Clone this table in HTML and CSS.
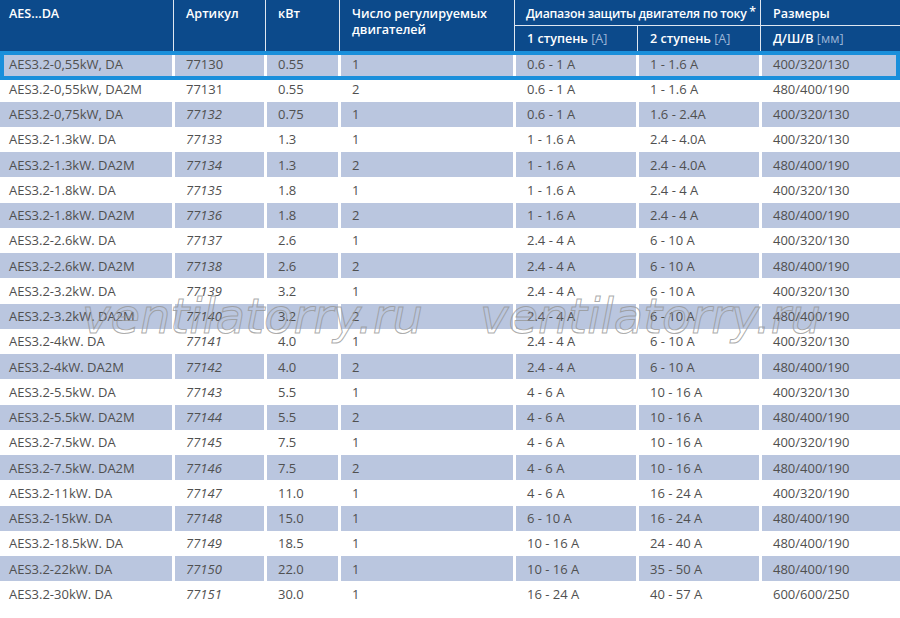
FILE: index.html
```html
<!DOCTYPE html>
<html lang="ru">
<head>
<meta charset="utf-8">
<title>AES...DA</title>
<link rel="stylesheet" href="styles.css">
</head>
<body>
<div class="page">
  <div class="head">
    <div class="h hc1 tall">AES...DA</div>
    <div class="h hc2 tall">Артикул</div>
    <div class="h hc3 tall">кВт</div>
    <div class="h hc4 tall">Число регулируемых<br>двигателей</div>
    <div class="h group">Диапазон защиты двигателя по току <span class="star">*</span></div>
    <div class="h hc7">Размеры</div>
    <div class="h sub">1 ступень <span class="unit">[A]</span></div>
    <div class="h sub">2 ступень <span class="unit">[A]</span></div>
    <div class="h sub">Д/Ш/В <span class="unit">[мм]</span></div>
  </div>
  <div class="body">
    <div class="row shade"><div class="c first">AES3.2-0,55kW, DA</div><div class="c">77130</div><div class="c">0.55</div><div class="c">1</div><div class="c">0.6 - 1 A</div><div class="c">1 - 1.6 A</div><div class="c">400/320/130</div></div>
    <div class="row"><div class="c first">AES3.2-0,55kW, DA2M</div><div class="c">77131</div><div class="c">0.55</div><div class="c">2</div><div class="c">0.6 - 1 A</div><div class="c">1 - 1.6 A</div><div class="c">480/400/190</div></div>
    <div class="row shade"><div class="c first">AES3.2-0,75kW, DA</div><div class="c it">77132</div><div class="c">0.75</div><div class="c">1</div><div class="c">0.6 - 1 A</div><div class="c">1.6 - 2.4A</div><div class="c">400/320/130</div></div>
    <div class="row"><div class="c first">AES3.2-1.3kW. DA</div><div class="c it">77133</div><div class="c">1.3</div><div class="c">1</div><div class="c">1 - 1.6 A</div><div class="c">2.4 - 4.0A</div><div class="c">400/320/130</div></div>
    <div class="row shade"><div class="c first">AES3.2-1.3kW. DA2M</div><div class="c it">77134</div><div class="c">1.3</div><div class="c">2</div><div class="c">1 - 1.6 A</div><div class="c">2.4 - 4.0A</div><div class="c">480/400/190</div></div>
    <div class="row"><div class="c first">AES3.2-1.8kW. DA</div><div class="c it">77135</div><div class="c">1.8</div><div class="c">1</div><div class="c">1 - 1.6 A</div><div class="c">2.4 - 4 A</div><div class="c">400/320/130</div></div>
    <div class="row shade"><div class="c first">AES3.2-1.8kW. DA2M</div><div class="c it">77136</div><div class="c">1.8</div><div class="c">2</div><div class="c">1 - 1.6 A</div><div class="c">2.4 - 4 A</div><div class="c">480/400/190</div></div>
    <div class="row"><div class="c first">AES3.2-2.6kW. DA</div><div class="c it">77137</div><div class="c">2.6</div><div class="c">1</div><div class="c">2.4 - 4 A</div><div class="c">6 - 10 A</div><div class="c">400/320/130</div></div>
    <div class="row shade"><div class="c first">AES3.2-2.6kW. DA2M</div><div class="c it">77138</div><div class="c">2.6</div><div class="c">2</div><div class="c">2.4 - 4 A</div><div class="c">6 - 10 A</div><div class="c">480/400/190</div></div>
    <div class="row"><div class="c first">AES3.2-3.2kW. DA</div><div class="c it">77139</div><div class="c">3.2</div><div class="c">1</div><div class="c">2.4 - 4 A</div><div class="c">6 - 10 A</div><div class="c">400/320/130</div></div>
    <div class="row shade"><div class="c first">AES3.2-3.2kW. DA2M</div><div class="c it">77140</div><div class="c">3.2</div><div class="c">2</div><div class="c">2.4 - 4 A</div><div class="c">6 - 10 A</div><div class="c">480/400/190</div></div>
    <div class="row"><div class="c first">AES3.2-4kW. DA</div><div class="c it">77141</div><div class="c">4.0</div><div class="c">1</div><div class="c">2.4 - 4 A</div><div class="c">6 - 10 A</div><div class="c">400/320/130</div></div>
    <div class="row shade"><div class="c first">AES3.2-4kW. DA2M</div><div class="c it">77142</div><div class="c">4.0</div><div class="c">2</div><div class="c">2.4 - 4 A</div><div class="c">6 - 10 A</div><div class="c">480/400/190</div></div>
    <div class="row"><div class="c first">AES3.2-5.5kW. DA</div><div class="c it">77143</div><div class="c">5.5</div><div class="c">1</div><div class="c">4 - 6 A</div><div class="c">10 - 16 A</div><div class="c">400/320/130</div></div>
    <div class="row shade"><div class="c first">AES3.2-5.5kW. DA2M</div><div class="c it">77144</div><div class="c">5.5</div><div class="c">2</div><div class="c">4 - 6 A</div><div class="c">10 - 16 A</div><div class="c">480/400/190</div></div>
    <div class="row"><div class="c first">AES3.2-7.5kW. DA</div><div class="c it">77145</div><div class="c">7.5</div><div class="c">1</div><div class="c">4 - 6 A</div><div class="c">10 - 16 A</div><div class="c">400/320/190</div></div>
    <div class="row shade"><div class="c first">AES3.2-7.5kW. DA2M</div><div class="c it">77146</div><div class="c">7.5</div><div class="c">2</div><div class="c">4 - 6 A</div><div class="c">10 - 16 A</div><div class="c">480/400/190</div></div>
    <div class="row"><div class="c first">AES3.2-11kW. DA</div><div class="c it">77147</div><div class="c">11.0</div><div class="c">1</div><div class="c">4 - 6 A</div><div class="c">16 - 24 A</div><div class="c">400/320/190</div></div>
    <div class="row shade"><div class="c first">AES3.2-15kW. DA</div><div class="c it">77148</div><div class="c">15.0</div><div class="c">1</div><div class="c">6 - 10 A</div><div class="c">16 - 24 A</div><div class="c">480/400/190</div></div>
    <div class="row"><div class="c first">AES3.2-18.5kW. DA</div><div class="c it">77149</div><div class="c">18.5</div><div class="c">1</div><div class="c">10 - 16 A</div><div class="c">24 - 40 A</div><div class="c">480/400/190</div></div>
    <div class="row shade"><div class="c first">AES3.2-22kW. DA</div><div class="c it">77150</div><div class="c">22.0</div><div class="c">1</div><div class="c">10 - 16 A</div><div class="c">35 - 50 A</div><div class="c">480/400/190</div></div>
    <div class="row"><div class="c first">AES3.2-30kW. DA</div><div class="c it">77151</div><div class="c">30.0</div><div class="c">1</div><div class="c">16 - 24 A</div><div class="c">40 - 57 A</div><div class="c">600/600/250</div></div>
  </div>
  <div class="highlight"></div>
  <div class="watermark wm1">ventilatorry.ru</div>
  <div class="watermark wm2">ventilatorry.ru</div>
</div>
</body>
</html>
```

FILE: styles.css
```css
html, body {
  margin: 0;
  padding: 0;
  background: #ffffff;
}

.page {
  position: relative;
  width: 900px;
  height: 618px;
  overflow: hidden;
  font-family: "Open Sans", "Liberation Sans", sans-serif;
}

/* ---------- header ---------- */
.head {
  display: grid;
  grid-template-columns: 173px 91px 73px 174px 122px 122px 139px;
  grid-template-rows: 25px 25px;
  column-gap: 1px;
  row-gap: 1px;
  height: 51px;
  background: #dfe7f1;
}

.h {
  background: #0c4a8b;
  color: #ffffff;
  font-size: 12.6px;
  font-weight: 600;
  line-height: 16px;
  padding: 6px 0 0 12px;
  white-space: nowrap;
  overflow: hidden;
}

.tall { grid-row: 1 / span 2; }
.hc1 { grid-column: 1; padding-left: 9px; }
.hc2 { grid-column: 2; }
.hc3 { grid-column: 3; }
.hc4 { grid-column: 4; }
.group {
  grid-column: 5 / span 2;
  grid-row: 1;
  font-size: 12.3px;
  letter-spacing: -0.3px;
  padding-left: 11px;
}
.hc7 { grid-column: 7; grid-row: 1; }
.sub { grid-row: 2; padding-top: 5px; }

.unit {
  font-weight: 400;
  color: #9db6d8;
}

.star {
  position: relative;
  top: -2px;
  letter-spacing: 0;
}

/* ---------- body ---------- */
.row {
  display: grid;
  grid-template-columns: 172px 89px 71px 172px 120px 120px 138px;
  column-gap: 3px;
  height: 25.25px;
}

.c {
  display: flex;
  align-items: center;
  padding-left: 11px;
  font-size: 13px;
  color: #505050;
  white-space: nowrap;
  background: #ffffff;
}

.c.first { padding-left: 9px; }
.c.it { font-style: italic; }

.shade .c { background: #bac6df; }

/* selection frame over the first data row */
.highlight {
  position: absolute;
  left: 0;
  top: 51px;
  width: 900px;
  height: 29px;
  box-sizing: border-box;
  border: 4px solid #1a8fdb;
  z-index: 2;
  pointer-events: none;
}

/* ---------- watermark ---------- */
.watermark {
  position: absolute;
  top: 293px;
  z-index: 3;
  font-family: "DejaVu Sans", sans-serif;
  font-style: oblique;
  font-size: 48px;
  line-height: 47px;
  color: transparent;
  -webkit-text-stroke: 1px rgba(150, 150, 150, 0.8);
  white-space: nowrap;
  pointer-events: none;
}

.wm1 { left: 82px; }
.wm2 { left: 480px; }
```
